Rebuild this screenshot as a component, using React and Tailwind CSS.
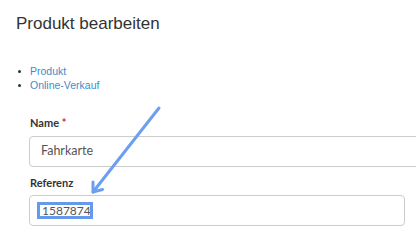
export default function App() {
  const links = ['Produkt', 'Online-Verkauf'];

  return (
    <div className="relative w-[416px] h-[235px] overflow-hidden bg-white text-[#333]">
      <h1 className="pt-[14px] pl-[16px] text-[17px] leading-[20px] font-normal font-['Liberation_Sans',Arial,sans-serif]">
        Produkt bearbeiten
      </h1>

      <ul className="mt-[30px] pl-[18px] font-['Liberation_Sans',Arial,sans-serif] text-[10.5px] leading-[14px]">
        {links.map((l) => (
          <li key={l} className="flex items-center">
            <span className="w-[3px] h-[3px] bg-[#333] rounded-full mr-[9px]" />
            <a className="text-[#428bca]">{l}</a>
          </li>
        ))}
      </ul>

      <form className="pl-[29px] font-['Lato','Open_Sans',sans-serif]">
        <label className="block mt-[24px] pl-[1px] text-[11px] leading-[14px] font-bold">
          Name <span className="text-[#c9302c]">*</span>
        </label>
        <div className="mt-[6px] w-[400px] h-[31px] border border-[#ccc] rounded-[4px] flex items-center pl-[11px] text-[12.5px] text-[#555]">
          Fahrkarte
        </div>

        <label className="block mt-[9px] pl-[1px] text-[11px] leading-[14px] font-bold">
          Referenz
        </label>
        <div className="relative mt-[5px] w-[376px] h-[31px] border border-[#ccc] rounded-[4px] flex items-center pl-[12px] text-[12px] text-[#555]">
          1587874
          <span className="absolute left-[7px] top-[6px] w-[56px] h-[17px] border-[3px] border-[#6699ee]" />
        </div>
      </form>

      <svg className="absolute inset-0 pointer-events-none" width="416" height="235" viewBox="0 0 416 235">
        <g stroke="#6c9ff0" strokeWidth="3" strokeLinecap="round" strokeLinejoin="round" fill="none">
          <path d="M159 108 L93 192" />
          <path d="M93 182 L93 192 L102.5 189.5" />
        </g>
      </svg>
    </div>
  );
}
